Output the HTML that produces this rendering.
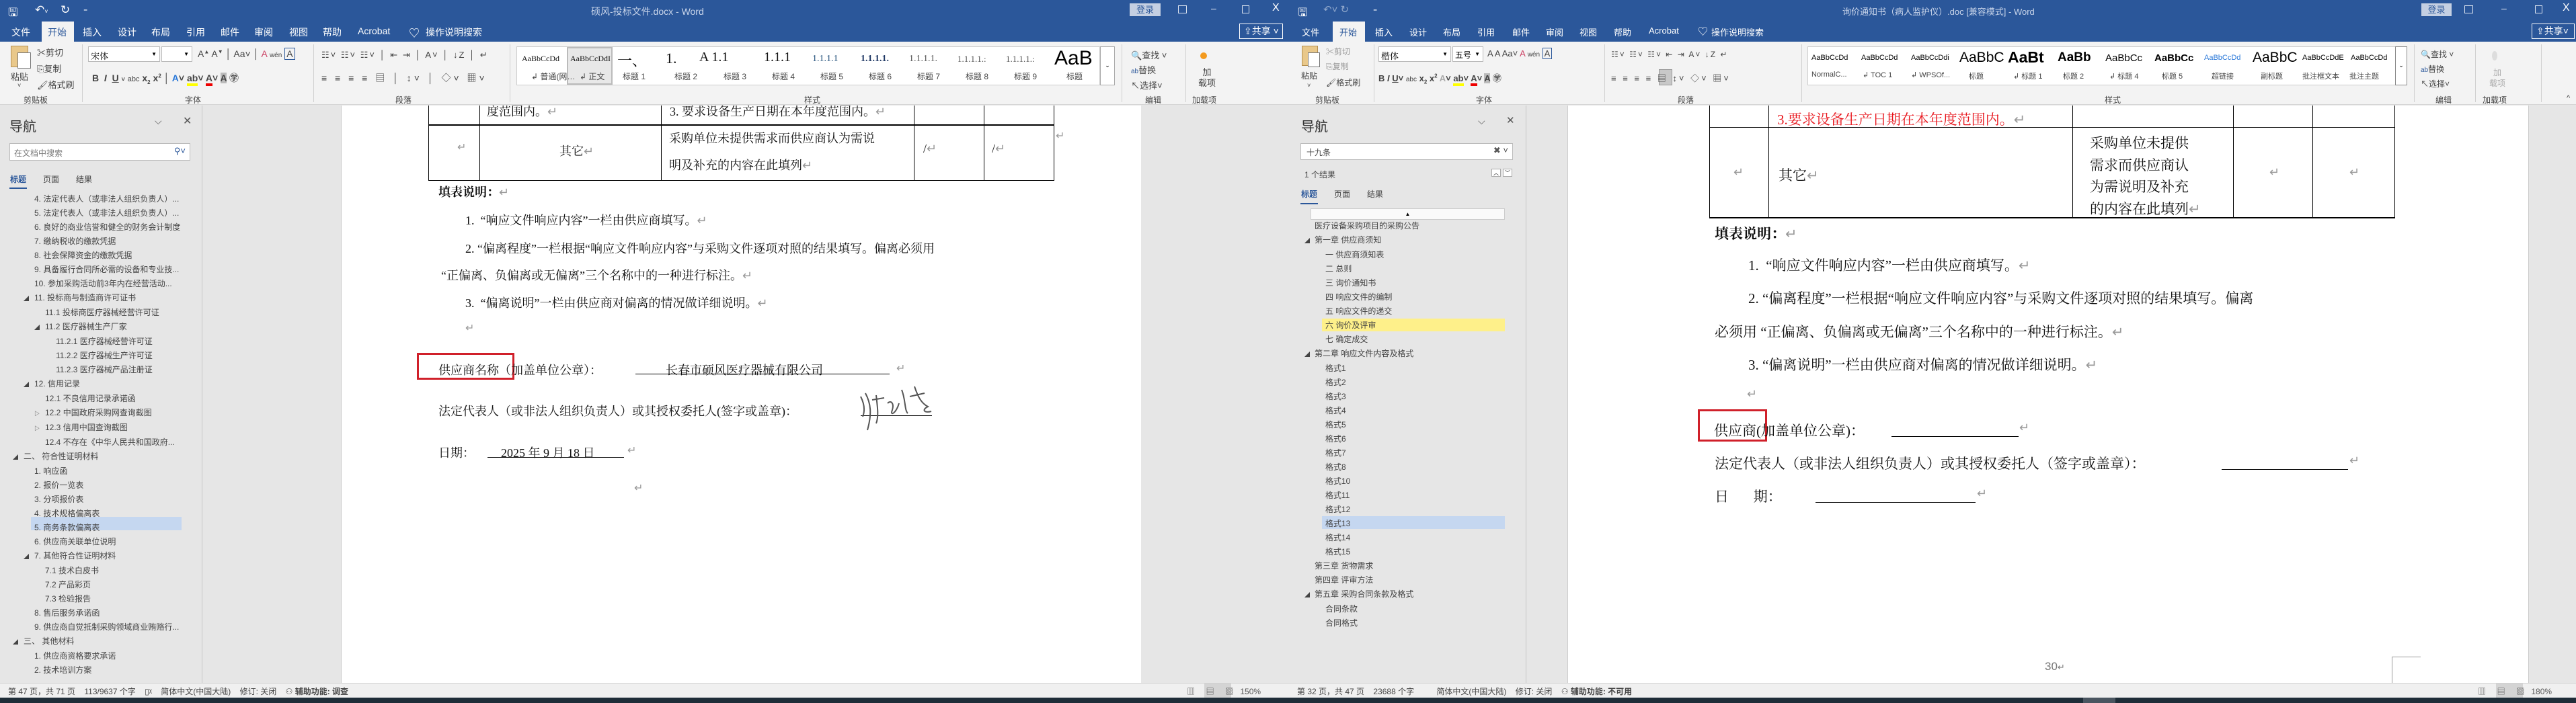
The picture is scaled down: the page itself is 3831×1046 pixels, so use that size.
<!DOCTYPE html>
<html><head><meta charset="utf-8">
<style>
*{margin:0;padding:0;box-sizing:border-box}
body{width:3831px;height:1046px;overflow:hidden;background:#e6e6e6;font-family:"Liberation Sans","Noto Sans CJK SC",sans-serif;position:relative}
.a{position:absolute;white-space:nowrap}
.tb{background:#2b579a}
.w{color:#fff}
.rb{background:#f3f3f3}
.g{color:#444}
.nav{font-size:12px;color:#444;line-height:14px}
.ser{font-family:"Liberation Serif","Noto Serif CJK SC",serif;color:#111}
.pm{color:#999}
.vl{position:absolute;background:#000;width:1px}
.hl{position:absolute;background:#000;height:1px}
.sep{position:absolute;width:1px;background:#d0d0d0}
.lbl{font-size:12px;color:#444}
</style></head><body>

<!-- ================= LEFT WINDOW ================= -->
<div class="a tb" style="left:0;top:0;width:1915px;height:62px"></div>
<div class="a w" style="left:12px;top:6px;font-size:17px">🖫</div>
<div class="a w" style="left:52px;top:5px;font-size:17px">↶<span style="font-size:9px">˅</span></div>
<div class="a w" style="left:90px;top:5px;font-size:17px">↻</div>
<div class="a w" style="left:124px;top:6px;font-size:12px">₌</div>
<div class="a" style="left:879px;top:7px;font-size:14px;color:#c9d5ea">硕风-投标文件.docx - Word</div>
<div class="a" style="left:1680px;top:5px;width:46px;height:19px;background:#c4cfe2;color:#2b579a;font-size:13px;text-align:center;line-height:19px">登录</div>
<div class="a" style="left:1752px;top:8px;width:13px;height:12px;border:1px solid #dfe6f1"></div>
<div class="a w" style="left:1801px;top:4px;font-size:14px">–</div>
<div class="a" style="left:1847px;top:8px;width:11px;height:12px;border:1px solid #dfe6f1"></div>
<div class="a w" style="left:1892px;top:3px;font-size:16px">X</div>
<div class="a" style="left:1843px;top:35px;width:65px;height:23px;border:1px solid #fff;color:#fff;font-size:14px;line-height:21px;padding-left:6px">⇪共享 ˅</div>
<!-- tabs -->
<div class="a rb" style="left:62px;top:32px;width:48px;height:30px"></div>
<div class="a w" style="left:17px;top:38px;font-size:14px">文件</div>
<div class="a" style="left:71px;top:38px;font-size:14px;color:#2b579a">开始</div>
<div class="a w" style="left:123px;top:38px;font-size:14px">插入</div>
<div class="a w" style="left:175px;top:38px;font-size:14px">设计</div>
<div class="a w" style="left:225px;top:38px;font-size:14px">布局</div>
<div class="a w" style="left:277px;top:38px;font-size:14px">引用</div>
<div class="a w" style="left:328px;top:38px;font-size:14px">邮件</div>
<div class="a w" style="left:378px;top:38px;font-size:14px">审阅</div>
<div class="a w" style="left:430px;top:38px;font-size:14px">视图</div>
<div class="a w" style="left:480px;top:38px;font-size:14px">帮助</div>
<div class="a w" style="left:532px;top:38px;font-size:14px">Acrobat</div>
<div class="a w" style="left:608px;top:36px;font-size:16px">♡</div>
<div class="a w" style="left:633px;top:38px;font-size:14px">操作说明搜索</div>
<!-- ribbon -->
<div class="a rb" style="left:0;top:62px;width:1915px;height:94px;border-bottom:1px solid #d6d6d6"></div>
<div class="a" style="left:16px;top:68px;width:26px;height:32px;background:#e9c88a;border:1px solid #b38e4f"></div>
<div class="a" style="left:26px;top:78px;width:20px;height:24px;background:#fff;border:1px solid #777"></div>
<div class="a g" style="left:16px;top:104px;font-size:13px">粘贴</div>
<div class="a g" style="left:26px;top:122px;font-size:9px">˅</div>
<div class="a g" style="left:55px;top:68px;font-size:13px">✂剪切</div>
<div class="a g" style="left:55px;top:92px;font-size:13px">⎘复制</div>
<div class="a g" style="left:55px;top:116px;font-size:13px">🖌格式刷</div>
<div class="a lbl" style="left:35px;top:140px">剪贴板</div>
<div class="sep" style="left:122px;top:66px;height:86px"></div>
<div class="a" style="left:131px;top:69px;width:107px;height:23px;background:#fff;border:1px solid #bbb;font-size:13px;padding:3px 3px;font-family:'Liberation Serif','Noto Serif CJK SC',serif">宋体<span style="position:absolute;right:4px;font-size:8px;top:6px">▼</span></div>
<div class="a" style="left:240px;top:69px;width:46px;height:23px;background:#fff;border:1px solid #bbb"><span style="position:absolute;right:4px;font-size:8px;top:6px">▼</span></div>
<div class="a g" style="left:294px;top:72px;font-size:14px">A<sup style="font-size:8px">▲</sup> A<sup style="font-size:8px">▼</sup> │ Aa˅ │ <span style="color:#c46">A</span> <span style="font-size:10px">wén</span> <span style="border:1px solid #2b579a;padding:0 2px">A</span></div>
<div class="a g" style="left:137px;top:106px;font-size:14px;font-weight:bold">B&nbsp;&nbsp;<i>I</i>&nbsp;&nbsp;<u>U</u> <span style="font-size:9px">˅</span> <span style="font-weight:normal;font-size:11px">abc</span> x<sub style="font-size:8px">2</sub> x<sup style="font-size:8px">2</sup> │ <span style="color:#2b79d9">A</span>˅ <span style="border-bottom:4px solid #ff0">ab</span>˅ <span style="border-bottom:4px solid #e00">A</span>˅ <span style="background:#bbb">A</span> ㊫</div>
<div class="a lbl" style="left:275px;top:140px">字体</div>
<div class="sep" style="left:466px;top:66px;height:86px"></div>
<div class="a g" style="left:478px;top:74px;font-size:13px;letter-spacing:2px">☷˅ ☷˅ ☷˅ │ ⇤ ⇥ │ A˅ │ ↓Z │ ↵</div>
<div class="a g" style="left:478px;top:106px;font-size:14px;letter-spacing:4px">≡ ≡ ≡ ≡ ▤ │ ↕˅ │ ◇˅ ▦˅</div>
<div class="a lbl" style="left:588px;top:140px">段落</div>
<div class="sep" style="left:758px;top:66px;height:86px"></div>
<!-- styles gallery -->
<div class="a" style="left:768px;top:69px;width:868px;height:58px;background:#fff;border:1px solid #ccc"></div>
<div class="a" style="left:843px;top:70px;width:68px;height:56px;border:2px solid #bbb;background:#e8e8e8"></div>
<div class="a ser" style="left:776px;top:80px;font-size:12px">AaBbCcDd</div>
<div class="a ser" style="left:848px;top:80px;font-size:12px">AaBbCcDdI</div>
<div class="a ser" style="left:918px;top:74px;font-size:22px">一、</div>
<div class="a ser" style="left:990px;top:74px;font-size:22px">1.</div>
<div class="a ser" style="left:1040px;top:74px;font-size:20px">A 1.1</div>
<div class="a ser" style="left:1136px;top:74px;font-size:20px">1.1.1</div>
<div class="a ser" style="left:1208px;top:80px;font-size:14px;color:#1f4e79">1.1.1.1</div>
<div class="a ser" style="left:1280px;top:80px;font-size:14px;color:#1f3864;font-weight:bold">1.1.1.1.</div>
<div class="a ser" style="left:1352px;top:80px;font-size:14px;color:#555">1.1.1.1.</div>
<div class="a ser" style="left:1424px;top:80px;font-size:13px;color:#555">1.1.1.1.:</div>
<div class="a ser" style="left:1496px;top:80px;font-size:13px;color:#555">1.1.1.1.:</div>
<div class="a" style="left:1568px;top:70px;font-size:30px">AaB</div>
<div class="a lbl" style="left:790px;top:105px">↲ 普通(网…</div>
<div class="a lbl" style="left:862px;top:105px">↲ 正文</div>
<div class="a lbl" style="left:926px;top:105px">标题 1</div>
<div class="a lbl" style="left:1003px;top:105px">标题 2</div>
<div class="a lbl" style="left:1076px;top:105px">标题 3</div>
<div class="a lbl" style="left:1148px;top:105px">标题 4</div>
<div class="a lbl" style="left:1220px;top:105px">标题 5</div>
<div class="a lbl" style="left:1292px;top:105px">标题 6</div>
<div class="a lbl" style="left:1364px;top:105px">标题 7</div>
<div class="a lbl" style="left:1436px;top:105px">标题 8</div>
<div class="a lbl" style="left:1508px;top:105px">标题 9</div>
<div class="a lbl" style="left:1586px;top:105px">标题</div>
<div class="a" style="left:1636px;top:69px;width:22px;height:58px;background:#fff;border:1px solid #aaa;font-size:9px;text-align:center;padding-top:22px">⌄</div>
<div class="a lbl" style="left:1196px;top:140px">样式</div>
<div class="sep" style="left:1668px;top:66px;height:86px"></div>
<div class="a g" style="left:1682px;top:72px;font-size:13px"><span style="color:#2b579a">🔍</span>查找 ˅</div>
<div class="a g" style="left:1682px;top:94px;font-size:13px"><span style="color:#2b579a;font-size:10px">ab</span>替换</div>
<div class="a g" style="left:1682px;top:117px;font-size:13px">↖选择˅</div>
<div class="a lbl" style="left:1703px;top:140px">编辑</div>
<div class="sep" style="left:1763px;top:66px;height:86px"></div>
<div class="a" style="left:1785px;top:78px;width:10px;height:10px;border-radius:50%;background:#f39a1e"></div>
<div class="a g" style="left:1782px;top:100px;font-size:13px;line-height:16px;text-align:center">加<br>载项</div>
<div class="a lbl" style="left:1773px;top:140px">加载项</div>

<!-- left nav pane -->
<div class="a" style="left:0;top:157px;width:301px;height:859px;background:#e6e6e6;border-right:1px solid #c6c6c6"></div>
<div class="a" style="left:14px;top:172px;font-size:20px;color:#333">导航</div>
<div class="a" style="left:230px;top:172px;font-size:14px;color:#555">⌵</div>
<div class="a" style="left:272px;top:170px;font-size:16px;color:#555">✕</div>
<div class="a" style="left:14px;top:213px;width:269px;height:26px;background:#fff;border:1px solid #bbb;font-size:12px;color:#777;padding:5px 6px">在文档中搜索<span style="position:absolute;right:6px;top:3px;color:#2b579a;font-size:13px">⚲˅</span></div>
<div class="a" style="left:15px;top:258px;font-size:12px;color:#2b579a;font-weight:bold">标题</div>
<div class="a" style="left:14px;top:279px;width:26px;height:2px;background:#2b579a"></div>
<div class="a" style="left:64px;top:258px;font-size:12px;color:#444">页面</div>
<div class="a" style="left:113px;top:258px;font-size:12px;color:#444">结果</div>
<div class="a" style="left:46px;top:769px;width:224px;height:20px;background:#c5d7f0"></div>
<div class="a nav" style="left:0;top:286px;line-height:21px">
<div style="padding-left:51px">4. 法定代表人（或非法人组织负责人）...</div>
<div style="padding-left:51px">5. 法定代表人（或非法人组织负责人）...</div>
<div style="padding-left:51px">6. 良好的商业信誉和健全的财务会计制度</div>
<div style="padding-left:51px">7. 缴纳税收的缴款凭据</div>
<div style="padding-left:51px">8. 社会保障资金的缴款凭据</div>
<div style="padding-left:51px">9. 具备履行合同所必需的设备和专业技...</div>
<div style="padding-left:51px">10. 参加采购活动前3年内在经营活动...</div>
<div style="padding-left:35px"><span style="font-size:8px;display:inline-block;width:16px">◢</span>11. 投标商与制造商许可证书</div>
<div style="padding-left:67px">11.1 投标商医疗器械经营许可证</div>
<div style="padding-left:51px"><span style="font-size:8px;display:inline-block;width:16px">◢</span>11.2 医疗器械生产厂家</div>
<div style="padding-left:83px">11.2.1 医疗器械经营许可证</div>
<div style="padding-left:83px">11.2.2 医疗器械生产许可证</div>
<div style="padding-left:83px">11.2.3 医疗器械产品注册证</div>
<div style="padding-left:35px"><span style="font-size:8px;display:inline-block;width:16px">◢</span>12. 信用记录</div>
<div style="padding-left:67px">12.1 不良信用记录承诺函</div>
<div style="padding-left:51px"><span style="font-size:8px;display:inline-block;width:16px">▷</span>12.2 中国政府采购网查询截图</div>
<div style="padding-left:51px"><span style="font-size:8px;display:inline-block;width:16px">▷</span>12.3 信用中国查询截图</div>
<div style="padding-left:67px">12.4 不存在《中华人民共和国政府...</div>
<div style="padding-left:19px"><span style="font-size:8px;display:inline-block;width:16px">◢</span>二、 符合性证明材料</div>
<div style="padding-left:51px">1. 响应函</div>
<div style="padding-left:51px">2. 报价一览表</div>
<div style="padding-left:51px">3. 分项报价表</div>
<div style="padding-left:51px">4. 技术规格偏离表</div>
<div style="padding-left:51px">5. 商务条款偏离表</div>
<div style="padding-left:51px">6. 供应商关联单位说明</div>
<div style="padding-left:35px"><span style="font-size:8px;display:inline-block;width:16px">◢</span>7. 其他符合性证明材料</div>
<div style="padding-left:67px">7.1 技术白皮书</div>
<div style="padding-left:67px">7.2 产品彩页</div>
<div style="padding-left:67px">7.3 检验报告</div>
<div style="padding-left:51px">8. 售后服务承诺函</div>
<div style="padding-left:51px">9. 供应商自觉抵制采购领域商业贿赂行...</div>
<div style="padding-left:19px"><span style="font-size:8px;display:inline-block;width:16px">◢</span>三、 其他材料</div>
<div style="padding-left:51px">1. 供应商资格要求承诺</div>
<div style="padding-left:51px">2. 技术培训方案</div>
</div>

<!-- left page -->
<div class="a" style="left:507px;top:157px;width:1190px;height:859px;background:#fff;overflow:hidden;border-left:1px solid #ccc">
 <div class="a ser" style="left:216px;top:-5px;font-size:18px">度范围内。<span class="pm">↵</span></div>
 <div class="a ser" style="left:488px;top:-5px;font-size:18px">3. 要求设备生产日期在本年度范围内。<span class="pm">↵</span></div>
</div>
<div class="vl" style="left:637px;top:157px;height:112px"></div>
<div class="vl" style="left:713px;top:157px;height:112px"></div>
<div class="vl" style="left:983px;top:157px;height:112px"></div>
<div class="vl" style="left:1359px;top:157px;height:112px"></div>
<div class="vl" style="left:1463px;top:157px;height:112px"></div>
<div class="vl" style="left:1567px;top:157px;height:112px"></div>
<div class="hl" style="left:637px;top:185px;width:931px;height:2px"></div>
<div class="hl" style="left:637px;top:268px;width:931px"></div>
<div class="a pm" style="left:680px;top:209px;font-size:16px">↵</div>
<div class="a ser" style="left:832px;top:211px;font-size:18px">其它<span class="pm">↵</span></div>
<div class="a ser" style="left:995px;top:192px;font-size:18px">采购单位未提供需求而供应商认为需说</div>
<div class="a ser" style="left:995px;top:232px;font-size:18px">明及补充的内容在此填列<span class="pm">↵</span></div>
<div class="a ser" style="left:1373px;top:211px;font-size:18px">/<span class="pm">↵</span></div>
<div class="a ser" style="left:1475px;top:211px;font-size:18px">/<span class="pm">↵</span></div>
<div class="a pm" style="left:1570px;top:192px;font-size:16px">↵</div>
<div class="a ser" style="left:652px;top:272px;font-size:18px;font-weight:bold">填表说明：<span class="pm" style="font-weight:normal">↵</span></div>
<div class="a ser" style="left:692px;top:314px;font-size:18px">1.&nbsp;&nbsp;“响应文件响应内容”一栏由供应商填写。<span class="pm">↵</span></div>
<div class="a ser" style="left:692px;top:356px;font-size:18px">2.&nbsp;“偏离程度”一栏根据“响应文件响应内容”与采购文件逐项对照的结果填写。偏离必须用</div>
<div class="a ser" style="left:656px;top:396px;font-size:18px">“正偏离、负偏离或无偏离”三个名称中的一种进行标注。<span class="pm">↵</span></div>
<div class="a ser" style="left:692px;top:437px;font-size:18px">3.&nbsp;&nbsp;“偏离说明”一栏由供应商对偏离的情况做详细说明。<span class="pm">↵</span></div>
<div class="a pm" style="left:692px;top:478px;font-size:16px">↵</div>
<div class="a" style="left:620px;top:525px;width:145px;height:40px;border:3px solid #d0202a"></div>
<div class="a ser" style="left:652px;top:537px;font-size:18px">供应商名称（加盖单位公章）：</div>
<div class="a ser" style="left:990px;top:537px;font-size:18px">长春市硕风医疗器械有限公司</div>
<div class="hl" style="left:945px;top:556px;width:378px"></div>
<div class="a pm" style="left:1333px;top:538px;font-size:16px">↵</div>
<div class="a ser" style="left:652px;top:598px;font-size:18px">法定代表人（或非法人组织负责人）或其授权委托人(签字或盖章)：</div>
<div class="hl" style="left:1280px;top:618px;width:106px"></div>
<svg class="a" style="left:1275px;top:570px" width="130" height="75" viewBox="0 0 130 75"><path d="M5 20 C10 30 12 40 8 50 M12 15 C20 30 22 45 15 70 M22 25 L40 22 M28 18 C30 35 32 50 28 60 M45 30 C50 25 55 30 52 40 C48 50 58 45 62 30 M66 10 C72 25 70 40 75 45 M78 20 L100 15 M85 5 C90 20 95 30 105 35 C95 40 100 45 110 42" stroke="#555" stroke-width="2" fill="none"/></svg>
<div class="a ser" style="left:652px;top:660px;font-size:18px">日期：</div>
<div class="a ser" style="left:745px;top:660px;font-size:18px">2025 年 9 月 18 日</div>
<div class="hl" style="left:725px;top:680px;width:203px"></div>
<div class="a pm" style="left:933px;top:660px;font-size:16px">↵</div>
<div class="a pm" style="left:943px;top:716px;font-size:16px">↵</div>
<!-- left status -->
<div class="a" style="left:0;top:1016px;width:1915px;height:22px;background:#f0f0f0;border-top:1px solid #d0d0d0"></div>
<div class="a" style="left:12px;top:1020px;font-size:12px;color:#444">第 47 页，共 71 页&nbsp;&nbsp;&nbsp;&nbsp;113/9637 个字&nbsp;&nbsp;&nbsp;&nbsp;▯ᵡ&nbsp;&nbsp;&nbsp;&nbsp;简体中文(中国大陆)&nbsp;&nbsp;&nbsp;&nbsp;修订: 关闭&nbsp;&nbsp;&nbsp;&nbsp;⚇ <b>辅助功能: 调查</b></div>
<div class="a" style="left:1791px;top:1017px;width:40px;height:21px;background:#d4d4d4"></div>
<div class="a" style="left:1765px;top:1020px;font-size:12px;color:#555">▥&nbsp;&nbsp;&nbsp;&nbsp;&nbsp;▤&nbsp;&nbsp;&nbsp;&nbsp;&nbsp;▧&nbsp;&nbsp;&nbsp;150%</div>

<!-- ================= RIGHT WINDOW ================= -->
<div class="a tb" style="left:1915px;top:0;width:1916px;height:62px"></div>
<div class="a w" style="left:1930px;top:6px;font-size:17px">🖫</div>
<div class="a" style="left:1968px;top:5px;font-size:15px;color:#90a8cc">↶˅ ↻</div>
<div class="a w" style="left:2042px;top:6px;font-size:12px">₌</div>
<div class="a" style="left:2740px;top:7px;font-size:13px;color:#c9d5ea">询价通知书（病人监护仪）.doc [兼容模式] - Word</div>
<div class="a" style="left:3601px;top:5px;width:45px;height:19px;background:#c4cfe2;color:#2b579a;font-size:13px;text-align:center;line-height:19px">登录</div>
<div class="a" style="left:3665px;top:8px;width:13px;height:12px;border:1px solid #dfe6f1"></div>
<div class="a w" style="left:3720px;top:4px;font-size:14px">–</div>
<div class="a" style="left:3770px;top:8px;width:11px;height:12px;border:1px solid #dfe6f1"></div>
<div class="a w" style="left:3811px;top:3px;font-size:16px">X</div>
<div class="a" style="left:3765px;top:35px;width:64px;height:23px;border:1px solid #fff;color:#fff;font-size:14px;line-height:21px;padding-left:6px">⇪共享˅</div>
<div class="a rb" style="left:1982px;top:32px;width:48px;height:30px"></div>
<div class="a w" style="left:1936px;top:38px;font-size:13px">文件</div>
<div class="a" style="left:1992px;top:38px;font-size:13px;color:#2b579a">开始</div>
<div class="a w" style="left:2045px;top:38px;font-size:13px">插入</div>
<div class="a w" style="left:2096px;top:38px;font-size:13px">设计</div>
<div class="a w" style="left:2146px;top:38px;font-size:13px">布局</div>
<div class="a w" style="left:2197px;top:38px;font-size:13px">引用</div>
<div class="a w" style="left:2249px;top:38px;font-size:13px">邮件</div>
<div class="a w" style="left:2299px;top:38px;font-size:13px">审阅</div>
<div class="a w" style="left:2349px;top:38px;font-size:13px">视图</div>
<div class="a w" style="left:2400px;top:38px;font-size:13px">帮助</div>
<div class="a w" style="left:2452px;top:38px;font-size:13px">Acrobat</div>
<div class="a w" style="left:2525px;top:36px;font-size:15px">♡</div>
<div class="a w" style="left:2545px;top:38px;font-size:13px">操作说明搜索</div>
<div class="a rb" style="left:1915px;top:62px;width:1916px;height:94px;border-bottom:1px solid #d6d6d6"></div>
<div class="a" style="left:1936px;top:68px;width:24px;height:30px;background:#e9c88a;border:1px solid #b38e4f"></div>
<div class="a" style="left:1945px;top:78px;width:18px;height:22px;background:#fff;border:1px solid #777"></div>
<div class="a g" style="left:1935px;top:104px;font-size:12px">粘贴</div>
<div class="a g" style="left:1944px;top:122px;font-size:9px">˅</div>
<div class="a" style="left:1972px;top:68px;font-size:12px;color:#999">✂剪切</div>
<div class="a" style="left:1972px;top:90px;font-size:12px;color:#999">⎘复制</div>
<div class="a g" style="left:1972px;top:114px;font-size:12px">🖌格式刷</div>
<div class="a lbl" style="left:1956px;top:140px">剪贴板</div>
<div class="sep" style="left:2043px;top:66px;height:86px"></div>
<div class="a" style="left:2050px;top:69px;width:108px;height:23px;background:#fff;border:1px solid #bbb;font-size:13px;padding:3px;font-family:'Liberation Serif','Noto Serif CJK SC',serif">楷体<span style="position:absolute;right:4px;font-size:8px;top:6px">▼</span></div>
<div class="a" style="left:2160px;top:69px;width:46px;height:23px;background:#fff;border:1px solid #bbb;font-size:12px;padding:3px">五号<span style="position:absolute;right:4px;font-size:8px;top:6px">▼</span></div>
<div class="a g" style="left:2212px;top:72px;font-size:13px">A A Aa˅ <span style="color:#c46">A</span> <span style="font-size:10px">wén</span> <span style="border:1px solid #2b579a;padding:0 2px">A</span></div>
<div class="a g" style="left:2050px;top:106px;font-size:13px;font-weight:bold">B&nbsp;<i>I</i>&nbsp;<u>U</u>˅ <span style="font-weight:normal;font-size:10px">abc</span> x<sub style="font-size:8px">2</sub> x<sup style="font-size:8px">2</sup> <span style="color:#aaa">A</span>˅ <span style="border-bottom:4px solid #ff0">ab</span>˅ <span style="border-bottom:4px solid #e00">A</span>˅ <span style="background:#bbb">A</span> ㊫</div>
<div class="a lbl" style="left:2195px;top:140px">字体</div>
<div class="sep" style="left:2386px;top:66px;height:86px"></div>
<div class="a g" style="left:2396px;top:74px;font-size:12px;letter-spacing:2px">☷˅ ☷˅ ☷˅ ⇤ ⇥ A˅ ↓Z ↵</div>
<div class="a" style="left:2467px;top:103px;width:20px;height:24px;background:#c8c8c8;border:1px solid #999"></div>
<div class="a g" style="left:2396px;top:106px;font-size:13px;letter-spacing:3px">≡ ≡ ≡ ≡ ▤ ↕˅ ◇˅ ▦˅</div>
<div class="a lbl" style="left:2495px;top:140px">段落</div>
<div class="sep" style="left:2679px;top:66px;height:86px"></div>
<div class="a" style="left:2688px;top:69px;width:892px;height:58px;background:#fff;border:1px solid #ccc"></div>
<div class="a" style="left:3562px;top:69px;width:18px;height:58px;background:#fff;border:1px solid #888;font-size:9px;text-align:center;padding-top:22px">⌄</div>
<div class="a" style="left:2694px;top:80px;font-size:11px">AaBbCcDd</div>
<div class="a" style="left:2768px;top:80px;font-size:11px">AaBbCcDd</div>
<div class="a" style="left:2842px;top:80px;font-size:11px">AaBbCcDdi</div>
<div class="a" style="left:2914px;top:74px;font-size:21px">AaBbC</div>
<div class="a" style="left:2986px;top:72px;font-size:23px;font-weight:bold">AaBt</div>
<div class="a" style="left:3060px;top:75px;font-size:19px;font-weight:bold">AaBb</div>
<div class="a" style="left:3131px;top:78px;font-size:15px">AaBbCc</div>
<div class="a" style="left:3204px;top:78px;font-size:15px;font-weight:bold">AaBbCc</div>
<div class="a" style="left:3278px;top:80px;font-size:11px;color:#2b79d9">AaBbCcDd</div>
<div class="a" style="left:3350px;top:74px;font-size:21px">AaBbC</div>
<div class="a" style="left:3424px;top:80px;font-size:11px">AaBbCcDdE</div>
<div class="a" style="left:3496px;top:80px;font-size:11px">AaBbCcDd</div>
<div class="a lbl" style="left:2694px;top:105px;font-size:11px">NormalC...</div>
<div class="a lbl" style="left:2770px;top:105px;font-size:11px">↲ TOC 1</div>
<div class="a lbl" style="left:2842px;top:105px;font-size:11px">↲ WPSOf...</div>
<div class="a lbl" style="left:2928px;top:105px;font-size:11px">标题</div>
<div class="a lbl" style="left:2994px;top:105px;font-size:11px">↲ 标题 1</div>
<div class="a lbl" style="left:3068px;top:105px;font-size:11px">标题 2</div>
<div class="a lbl" style="left:3137px;top:105px;font-size:11px">↲ 标题 4</div>
<div class="a lbl" style="left:3215px;top:105px;font-size:11px">标题 5</div>
<div class="a lbl" style="left:3289px;top:105px;font-size:11px">超链接</div>
<div class="a lbl" style="left:3362px;top:105px;font-size:11px">副标题</div>
<div class="a lbl" style="left:3424px;top:105px;font-size:11px">批注框文本</div>
<div class="a lbl" style="left:3494px;top:105px;font-size:11px">批注主题</div>
<div class="a lbl" style="left:3130px;top:140px">样式</div>
<div class="sep" style="left:3590px;top:66px;height:86px"></div>
<div class="a g" style="left:3600px;top:72px;font-size:12px"><span style="color:#2b579a">🔍</span>查找 ˅</div>
<div class="a g" style="left:3600px;top:94px;font-size:12px"><span style="color:#2b579a;font-size:10px">ab</span>替换</div>
<div class="a g" style="left:3600px;top:116px;font-size:12px">↖选择˅</div>
<div class="a lbl" style="left:3622px;top:140px">编辑</div>
<div class="sep" style="left:3681px;top:66px;height:86px"></div>
<div class="a" style="left:3706px;top:76px;width:8px;height:14px;border-radius:50%;background:#ddd"></div>
<div class="a" style="left:3702px;top:100px;font-size:12px;line-height:16px;color:#aaa;text-align:center">加<br>载项</div>
<div class="a lbl" style="left:3692px;top:140px">加载项</div>
<div class="sep" style="left:3779px;top:66px;height:86px"></div>
<div class="a g" style="left:3817px;top:140px;font-size:11px">^</div>

<!-- right nav -->
<div class="a" style="left:1915px;top:157px;width:355px;height:859px;background:#e6e6e6;border-right:1px solid #c6c6c6"></div>
<div class="a" style="left:1935px;top:172px;font-size:20px;color:#333">导航</div>
<div class="a" style="left:2198px;top:172px;font-size:14px;color:#555">⌵</div>
<div class="a" style="left:2240px;top:170px;font-size:15px;color:#555">✕</div>
<div class="a" style="left:1934px;top:213px;width:316px;height:25px;background:#fff;border:1px solid #bbb;font-size:12px;color:#444;padding:4px 8px">十九条<span style="position:absolute;right:6px;top:2px;font-size:13px;color:#555">✖ ˅</span></div>
<div class="a" style="left:1940px;top:251px;font-size:12px;color:#444">1 个结果</div>
<div class="a" style="left:2218px;top:251px;width:14px;height:12px;border:1px solid #aaa;background:#fff;font-size:8px;text-align:center">︿</div>
<div class="a" style="left:2235px;top:251px;width:14px;height:12px;border:1px solid #aaa;background:#fff;font-size:8px;text-align:center">﹀</div>
<div class="a" style="left:1935px;top:280px;font-size:12px;color:#2b579a;font-weight:bold">标题</div>
<div class="a" style="left:1934px;top:302px;width:26px;height:2px;background:#2b579a"></div>
<div class="a" style="left:1984px;top:280px;font-size:12px;color:#444">页面</div>
<div class="a" style="left:2033px;top:280px;font-size:12px;color:#444">结果</div>
<div class="a" style="left:1949px;top:310px;width:289px;height:17px;background:#fafafa;border:1px solid #ccc;font-size:8px;text-align:center;line-height:15px">▲</div>
<div class="a" style="left:1966px;top:474px;width:272px;height:19px;background:#fef08a"></div>
<div class="a" style="left:1966px;top:768px;width:272px;height:19px;background:#c5d7f0"></div>
<div class="a nav" style="left:1915px;top:326px;line-height:21px">
<div style="padding-left:40px">医疗设备采购项目的采购公告</div>
<div style="padding-left:25px"><span style="font-size:8px;display:inline-block;width:15px">◢</span>第一章 供应商须知</div>
<div style="padding-left:56px">一 供应商须知表</div>
<div style="padding-left:56px">二 总则</div>
<div style="padding-left:56px">三 询价通知书</div>
<div style="padding-left:56px">四 响应文件的编制</div>
<div style="padding-left:56px">五 响应文件的递交</div>
<div style="padding-left:56px">六 询价及评审</div>
<div style="padding-left:56px">七 确定成交</div>
<div style="padding-left:25px"><span style="font-size:8px;display:inline-block;width:15px">◢</span>第二章 响应文件内容及格式</div>
<div style="padding-left:56px">格式1</div><div style="padding-left:56px">格式2</div><div style="padding-left:56px">格式3</div><div style="padding-left:56px">格式4</div><div style="padding-left:56px">格式5</div><div style="padding-left:56px">格式6</div><div style="padding-left:56px">格式7</div><div style="padding-left:56px">格式8</div><div style="padding-left:56px">格式10</div><div style="padding-left:56px">格式11</div><div style="padding-left:56px">格式12</div><div style="padding-left:56px">格式13</div><div style="padding-left:56px">格式14</div><div style="padding-left:56px">格式15</div>
<div style="padding-left:40px">第三章 货物需求</div>
<div style="padding-left:40px">第四章 评审方法</div>
<div style="padding-left:25px"><span style="font-size:8px;display:inline-block;width:15px">◢</span>第五章 采购合同条款及格式</div>
<div style="padding-left:56px">合同条款</div>
<div style="padding-left:56px">合同格式</div>
</div>

<!-- right page -->
<div class="a" style="left:2331px;top:157px;width:1429px;height:859px;background:#fff;border-left:1px solid #ccc"></div>
<div class="a" style="left:3760px;top:157px;width:71px;height:859px;background:#e6e6e6;border-left:1px solid #ccc"></div>
<div class="vl" style="left:2542px;top:157px;height:168px"></div>
<div class="vl" style="left:2630px;top:157px;height:168px"></div>
<div class="vl" style="left:3082px;top:157px;height:168px"></div>
<div class="vl" style="left:3321px;top:157px;height:168px"></div>
<div class="vl" style="left:3439px;top:157px;height:168px"></div>
<div class="vl" style="left:3561px;top:157px;height:168px"></div>
<div class="hl" style="left:2542px;top:189px;width:1020px"></div>
<div class="hl" style="left:2542px;top:323px;width:1020px;height:2px"></div>
<div class="a ser" style="left:2643px;top:162px;font-size:21px;color:#e8141b">3.要求设备生产日期在本年度范围内。<span class="pm">↵</span></div>
<div class="a pm" style="left:2578px;top:246px;font-size:18px">↵</div>
<div class="a ser" style="left:2645px;top:245px;font-size:21px">其它<span class="pm">↵</span></div>
<div class="a ser" style="left:3108px;top:197px;font-size:21px;line-height:32.5px">采购单位未提供<br>需求而供应商认<br>为需说明及补充<br>的内容在此填列<span class="pm">↵</span></div>
<div class="a pm" style="left:3375px;top:246px;font-size:18px">↵</div>
<div class="a pm" style="left:3494px;top:246px;font-size:18px">↵</div>
<div class="a ser" style="left:2550px;top:332px;font-size:21px;font-weight:bold">填表说明：<span class="pm" style="font-weight:normal">↵</span></div>
<div class="a ser" style="left:2600px;top:379px;font-size:21px">1.&nbsp;&nbsp;“响应文件响应内容”一栏由供应商填写。<span class="pm">↵</span></div>
<div class="a ser" style="left:2600px;top:428px;font-size:21px">2.&nbsp;“偏离程度”一栏根据“响应文件响应内容”与采购文件逐项对照的结果填写。偏离</div>
<div class="a ser" style="left:2550px;top:478px;font-size:21px">必须用&nbsp;“正偏离、负偏离或无偏离”三个名称中的一种进行标注。<span class="pm">↵</span></div>
<div class="a ser" style="left:2600px;top:527px;font-size:21px">3.&nbsp;“偏离说明”一栏由供应商对偏离的情况做详细说明。<span class="pm">↵</span></div>
<div class="a pm" style="left:2598px;top:576px;font-size:18px">↵</div>
<div class="a" style="left:2525px;top:609px;width:103px;height:48px;border:3px solid #d0202a"></div>
<div class="a ser" style="left:2549px;top:625px;font-size:21px">供应商(加盖单位公章)：</div>
<div class="hl" style="left:2813px;top:649px;width:189px"></div>
<div class="a pm" style="left:3003px;top:626px;font-size:18px">↵</div>
<div class="a ser" style="left:2550px;top:674px;font-size:21px">法定代表人（或非法人组织负责人）或其授权委托人（签字或盖章）：</div>
<div class="hl" style="left:3304px;top:698px;width:188px"></div>
<div class="a pm" style="left:3494px;top:675px;font-size:18px">↵</div>
<div class="a ser" style="left:2550px;top:723px;font-size:21px">日&nbsp;&nbsp;&nbsp;&nbsp;&nbsp;&nbsp;&nbsp;期：</div>
<div class="hl" style="left:2700px;top:747px;width:238px"></div>
<div class="a pm" style="left:2940px;top:724px;font-size:18px">↵</div>
<div class="a" style="left:3041px;top:982px;font-size:17px;color:#777">30<span style="font-size:13px">↵</span></div>
<div class="a" style="left:3557px;top:977px;width:43px;height:40px;border-left:1px solid #999;border-top:1px solid #999"></div>
<!-- right status -->
<div class="a" style="left:1915px;top:1016px;width:1916px;height:22px;background:#f0f0f0;border-top:1px solid #d0d0d0"></div>
<div class="a" style="left:1929px;top:1020px;font-size:12px;color:#444">第 32 页，共 47 页&nbsp;&nbsp;&nbsp;&nbsp;23688 个字&nbsp;&nbsp;&nbsp;&nbsp;&nbsp;&nbsp;&nbsp;&nbsp;&nbsp;&nbsp;简体中文(中国大陆)&nbsp;&nbsp;&nbsp;&nbsp;修订: 关闭&nbsp;&nbsp;&nbsp;&nbsp;⚇ <b>辅助功能: 不可用</b></div>
<div class="a" style="left:3712px;top:1017px;width:40px;height:21px;background:#d4d4d4"></div>
<div class="a" style="left:3685px;top:1020px;font-size:12px;color:#555">▥&nbsp;&nbsp;&nbsp;&nbsp;&nbsp;▤&nbsp;&nbsp;&nbsp;&nbsp;&nbsp;▧&nbsp;&nbsp;&nbsp;180%</div>

<!-- taskbar -->
<div class="a" style="left:0;top:1038px;width:3831px;height:8px;background:#1f2d38"></div>
<div class="a" style="left:3098px;top:1038px;width:48px;height:8px;background:#4a5560"></div>
</body></html>
